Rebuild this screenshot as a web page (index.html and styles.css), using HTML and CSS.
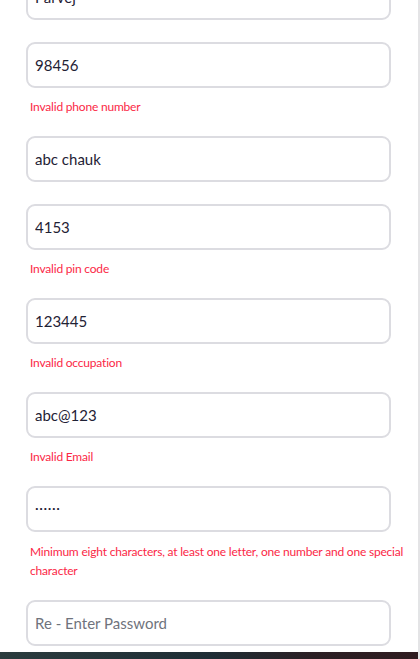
FILE: index.html
```html
<!DOCTYPE html>
<html lang="en">
<head>
<meta charset="utf-8">
<title>Register</title>
<link rel="stylesheet" href="styles.css">
</head>
<body>
<div class="page">
  <form class="form">
    <div class="group">
      <input class="input" type="text" value="Parvej">
    </div>
    <div class="group">
      <input class="input" type="text" value="98456">
      <p class="error">Invalid phone number</p>
    </div>
    <div class="group">
      <input class="input" type="text" value="abc chauk">
    </div>
    <div class="group">
      <input class="input" type="text" value="4153">
      <p class="error">Invalid pin code</p>
    </div>
    <div class="group">
      <input class="input" type="text" value="123445">
      <p class="error">Invalid occupation</p>
    </div>
    <div class="group">
      <input class="input" type="text" value="abc@123">
      <p class="error">Invalid Email</p>
    </div>
    <div class="group">
      <input class="input dots" type="text" value="······" aria-label="Password">
      <p class="error multi">Minimum eight characters, at least one letter, one number and one special character</p>
    </div>
    <div class="group last">
      <input class="input" type="password" placeholder="Re - Enter Password">
    </div>
  </form>
  <div class="footer"></div>
</div>
</body>
</html>
```
FILE: styles.css
```css
* { box-sizing: border-box; }
html, body { margin: 0; padding: 0; background: #ffffff; overflow: hidden; }
body { font-family: Lato, "Open Sans", sans-serif; }
.page {
  width: 420px;
  border-right: 2px solid #e4e4e6;
  background: #ffffff;
}
.form {
  display: flex;
  flex-direction: column;
  margin-top: -26px;
  padding-left: 26px;
  padding-right: 2px;
}
.group {
  display: flex;
  flex-direction: column;
  margin-bottom: 22px;
}
.group.last { margin-bottom: 6px; }
.input {
  width: 365px;
  height: 46px;
  border: 2px solid #dcdce1;
  border-radius: 9px;
  padding: 0 7px;
  font-family: inherit;
  font-size: 15px;
  color: #1f2235;
  background: #ffffff;
  outline: none;
}
.input.dots { letter-spacing: 0.6px; font-size: 14px; padding-bottom: 3px; }
.input::placeholder { color: #6f737c; }
.error {
  margin: 10px 0 -2px 0;
  padding-left: 4px;
  font-size: 12px;
  letter-spacing: -0.2px;
  line-height: 18px;
  color: #fb2746;
}
.error.multi { line-height: 19px; }
.footer {
  height: 40px;
  background: linear-gradient(90deg, #2b3c3e 0%, #1e2d35 50%, #2b1f24 75%, #2f1c20 100%);
}
```
